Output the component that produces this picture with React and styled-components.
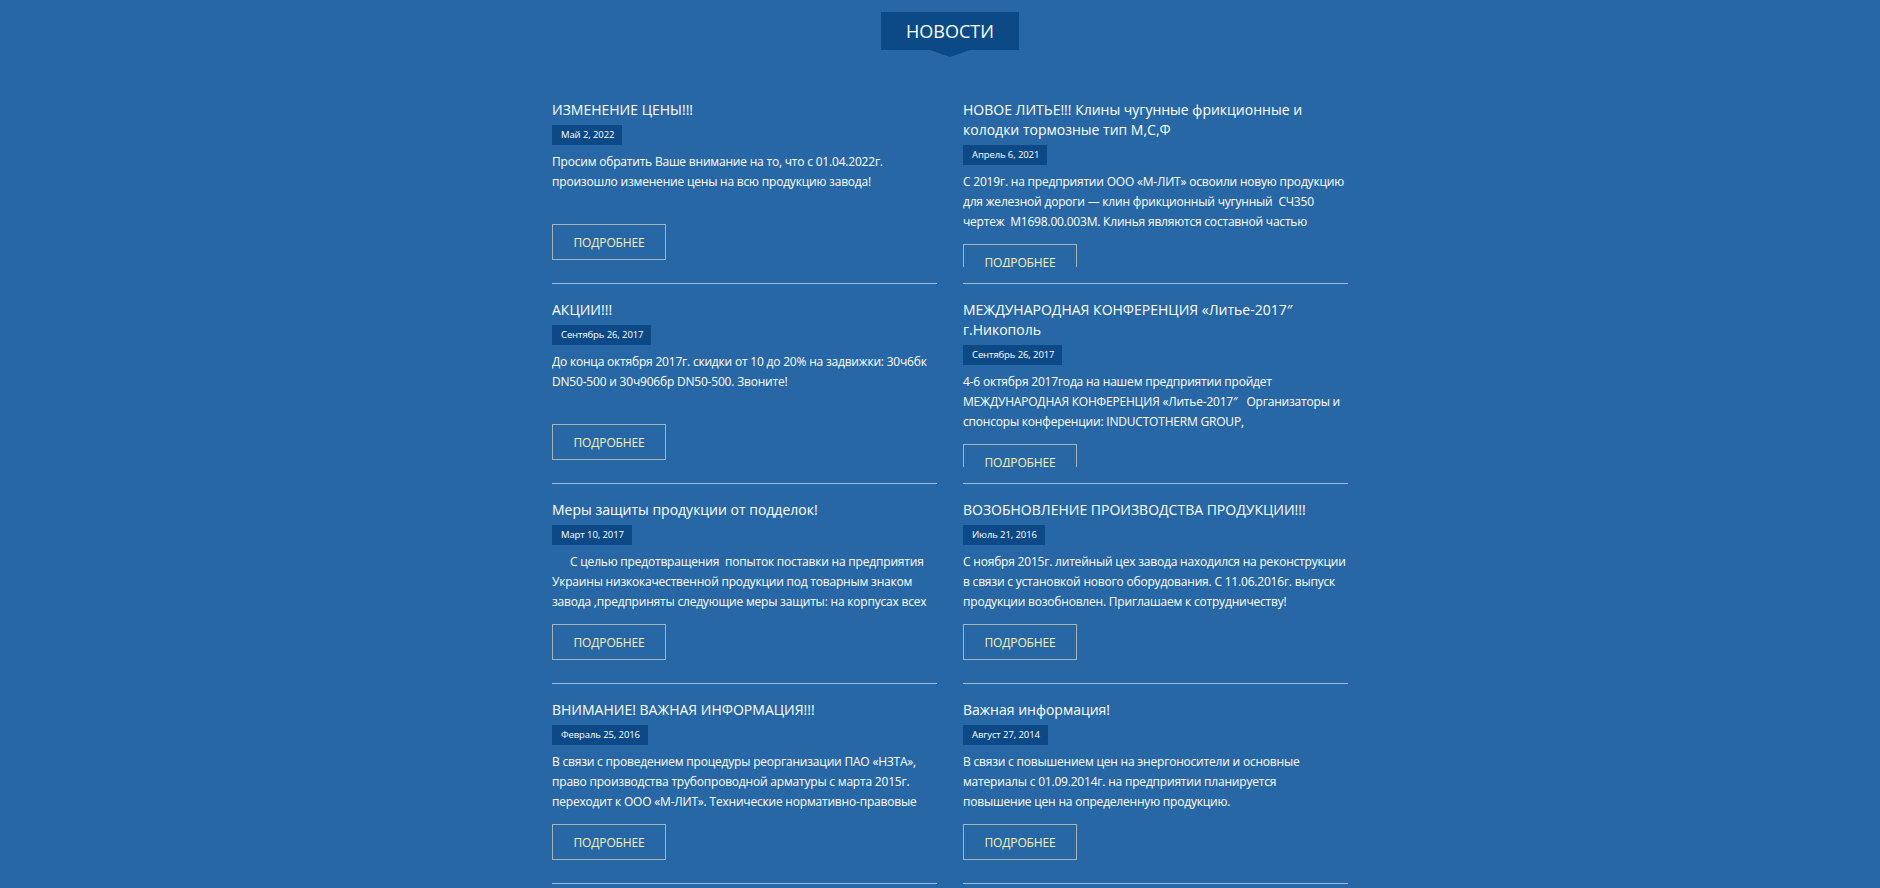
import React from "react";
import styled, { createGlobalStyle } from "styled-components";

const GlobalStyle = createGlobalStyle`
  html, body {
    margin: 0;
    padding: 0;
    background: #2767a5;
  }
  body {
    font-family: "Open Sans", "Noto Sans", sans-serif;
    color: #ffffff;
  }
`;

const Page = styled.div`
  min-height: 888px;
  background: #2767a5;
  overflow: hidden;
`;

const Wrapper = styled.div`
  width: 796px;
  margin: 0 auto;
  padding-left: 20px;
`;

const HeaderRow = styled.div`
  display: flex;
  justify-content: center;
  padding-top: 12px;
  height: 84px;
  box-sizing: border-box;
`;

const SectionTitle = styled.h2`
  position: relative;
  margin: 0;
  height: 38px;
  padding: 0 25px;
  background: #0b4a87;
  color: #ffffff;
  font-size: 18px;
  font-weight: 400;
  line-height: 38px;
  text-transform: uppercase;

  &::after {
    content: "";
    position: absolute;
    left: 50%;
    bottom: -7px;
    margin-left: -20px;
    border-left: 20px solid transparent;
    border-right: 20px solid transparent;
    border-top: 7px solid #0b4a87;
  }
`;

const Grid = styled.div`
  display: grid;
  grid-template-columns: 385px 385px;
  column-gap: 26px;
`;

const Item = styled.article`
  padding: 16px 0;
  border-bottom: 1px solid #9dbde0;
`;

const ItemInner = styled.div`
  height: 167px;
  overflow: hidden;
`;

const Title = styled.h3`
  margin: 0;
  font-size: 14px;
  font-weight: 400;
  line-height: 20px;
  color: #ffffff;
`;

const DateBadge = styled.div`
  width: fit-content;
  margin-top: 5px;
  height: 20px;
  padding: 0 8px 0 9px;
  background: #0b4a87;
  color: #ffffff;
  font-size: 9.5px;
  line-height: 20px;
  letter-spacing: -0.1px;
  font-weight: 400;
`;

const Excerpt = styled.p`
  margin: 7px 0 0;
  height: 60px;
  overflow: hidden;
  font-size: 12px;
  line-height: 20px;
  letter-spacing: -0.2px;
  white-space: pre-wrap;
  color: #ffffff;
`;

const Indent = styled.span`
  display: inline-block;
  width: 18px;
`;

const MoreButton = styled.a`
  display: flex;
  align-items: center;
  justify-content: center;
  box-sizing: border-box;
  margin-top: 12px;
  width: 114px;
  height: 36px;
  border: 1px solid #a5b5b5;
  color: #f5f0b4;
  font-size: 12px;
  letter-spacing: -0.15px;
  text-decoration: none;
  text-transform: uppercase;
`;

const news = [
  {
    title: "ИЗМЕНЕНИЕ ЦЕНЫ!!!",
    date: "Май 2, 2022",
    lines: [
      "Просим обратить Ваше внимание на то, что с 01.04.2022г.",
      "произошло изменение цены на всю продукцию завода!",
    ],
  },
  {
    title: "НОВОЕ ЛИТЬЕ!!! Клины чугунные фрикционные и колодки тормозные тип М,С,Ф",
    date: "Апрель 6, 2021",
    lines: [
      "С 2019г. на предприятии ООО «М-ЛИТ» освоили новую продукцию",
      "для железной дороги — клин фрикционный чугунный  СЧ350",
      "чертеж  М1698.00.003М. Клинья являются составной частью",
      "фрикционного гасителя колебаний тележки грузового вагона.",
    ],
  },
  {
    title: "АКЦИИ!!!",
    date: "Сентябрь 26, 2017",
    lines: [
      "До конца октября 2017г. скидки от 10 до 20% на задвижки: 30ч6бк",
      "DN50-500 и 30ч906бр DN50-500. Звоните!",
    ],
  },
  {
    title: "МЕЖДУНАРОДНАЯ КОНФЕРЕНЦИЯ «Литье-2017″ г.Никополь",
    date: "Сентябрь 26, 2017",
    lines: [
      "4-6 октября 2017года на нашем предприятии пройдет",
      "МЕЖДУНАРОДНАЯ КОНФЕРЕНЦИЯ «Литье-2017″   Организаторы и",
      "спонсоры конференции: INDUCTOTHERM GROUP,",
      "Ассоциация литейщиков Украины.",
    ],
  },
  {
    title: "Меры защиты продукции от подделок!",
    date: "Март 10, 2017",
    indent: true,
    lines: [
      "С целью предотвращения  попыток поставки на предприятия",
      "Украины низкокачественной продукции под товарным знаком",
      "завода ,предприняты следующие меры защиты: на корпусах всех",
      "изделий нанесен товарный знак завода.",
    ],
  },
  {
    title: "ВОЗОБНОВЛЕНИЕ ПРОИЗВОДСТВА ПРОДУКЦИИ!!!",
    date: "Июль 21, 2016",
    lines: [
      "С ноября 2015г. литейный цех завода находился на реконструкции",
      "в связи с установкой нового оборудования. С 11.06.2016г. выпуск",
      "продукции возобновлен. Приглашаем к сотрудничеству!",
    ],
  },
  {
    title: "ВНИМАНИЕ! ВАЖНАЯ ИНФОРМАЦИЯ!!!",
    date: "Февраль 25, 2016",
    lines: [
      "В связи с проведением процедуры реорганизации ПАО «НЗТА»,",
      "право производства трубопроводной арматуры с марта 2015г.",
      "переходит к ООО «М-ЛИТ». Технические нормативно-правовые",
      "документы остаются без изменений.",
    ],
  },
  {
    title: "Важная информация!",
    date: "Август 27, 2014",
    lines: [
      "В связи с повышением цен на энергоносители и основные",
      "материалы с 01.09.2014г. на предприятии планируется",
      "повышение цен на определенную продукцию.",
    ],
  },
];

export default function App() {
  return (
    <Page>
      <GlobalStyle />
      <Wrapper>
        <HeaderRow>
          <SectionTitle>Новости</SectionTitle>
        </HeaderRow>
        <Grid>
          {news.map((n, i) => (
            <Item key={i}>
              <ItemInner>
                <Title>{n.title}</Title>
                <DateBadge>{n.date}</DateBadge>
                <Excerpt>
                  {n.indent && <Indent />}
                  {n.lines.join("\n")}
                </Excerpt>
                <MoreButton href="#">Подробнее</MoreButton>
              </ItemInner>
            </Item>
          ))}
        </Grid>
      </Wrapper>
    </Page>
  );
}
